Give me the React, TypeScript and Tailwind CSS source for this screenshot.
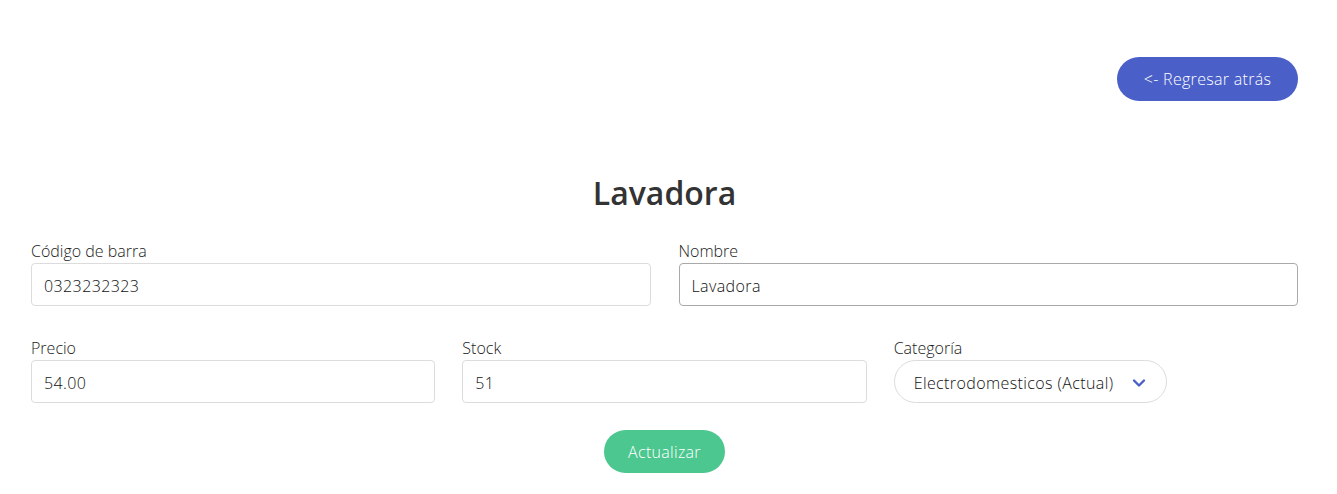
import { useState } from "react";

export default function App() {
  const [codigo, setCodigo] = useState("0323232323");
  const [nombre, setNombre] = useState("Lavadora");
  const [precio, setPrecio] = useState("54.00");
  const [stock, setStock] = useState("51");

  return (
    <div className="min-h-screen bg-white pl-[31px] pr-[39px] pt-[57px] font-['Open_Sans',sans-serif] font-light text-[#1a1a1a]">
      <div className="flex justify-end">
        <button className="h-[44px] w-[181px] rounded-full bg-[#4a5fc8] text-white text-[16px] tracking-[0.3px]">
          &lt;- Regresar atrás
        </button>
      </div>

      <h1 className="mt-[73px] text-center text-[32px] leading-[38px] font-semibold text-[#333]">
        {nombre}
      </h1>

      <form className="mt-[27px]" onSubmit={(e) => e.preventDefault()}>
        <div className="grid grid-cols-2 gap-x-[28px]">
          <div>
            <label className="block text-[16px] leading-[24px]">Código de barra</label>
            <input
              value={codigo}
              onChange={(e) => setCodigo(e.target.value)}
              className="w-full h-[43px] pt-[2px] px-[12px] border border-[#dcdcdc] rounded-[4px] text-[16px] tracking-[0.4px] text-[#111] outline-none"
            />
          </div>
          <div>
            <label className="block text-[16px] leading-[24px]">Nombre</label>
            <input
              value={nombre}
              onChange={(e) => setNombre(e.target.value)}
              className="w-full h-[43px] pt-[2px] px-[12px] border border-[#a9a9a9] rounded-[4px] text-[16px] tracking-[0.4px] text-[#111] outline-none"
            />
          </div>
        </div>

        <div className="mt-[30px] grid grid-cols-3 gap-x-[27px]">
          <div>
            <label className="block text-[16px] leading-[24px]">Precio</label>
            <input
              value={precio}
              onChange={(e) => setPrecio(e.target.value)}
              className="w-full h-[43px] pt-[2px] px-[12px] border border-[#dcdcdc] rounded-[4px] text-[16px] tracking-[0.4px] text-[#111] outline-none"
            />
          </div>
          <div>
            <label className="block text-[16px] leading-[24px]">Stock</label>
            <input
              value={stock}
              onChange={(e) => setStock(e.target.value)}
              className="w-full h-[43px] pt-[2px] px-[12px] border border-[#dcdcdc] rounded-[4px] text-[16px] tracking-[0.4px] text-[#111] outline-none"
            />
          </div>
          <div>
            <label className="block text-[16px] leading-[24px]">Categoría</label>
            <div className="w-[273px] h-[43px] pt-[2px] pl-[19px] pr-[20px] flex items-center justify-between border border-[#dcdcdc] rounded-full text-[16px] tracking-[0.4px] text-[#111] whitespace-nowrap">
              <span>Electrodomesticos (Actual)</span>
              <svg width="14" height="10" viewBox="0 0 14 10" fill="none">
                <path d="M2 2.5 L7 7.5 L12 2.5" stroke="#4a5fc8" strokeWidth="2.4" strokeLinecap="round" strokeLinejoin="round" />
              </svg>
            </div>
          </div>
        </div>

        <div className="mt-[27px] flex justify-center">
          <button
            type="submit"
            className="h-[43px] w-[121px] rounded-full bg-[#4cc78f] text-white text-[16px] tracking-[0.3px]"
          >
            Actualizar
          </button>
        </div>
      </form>
    </div>
  );
}
